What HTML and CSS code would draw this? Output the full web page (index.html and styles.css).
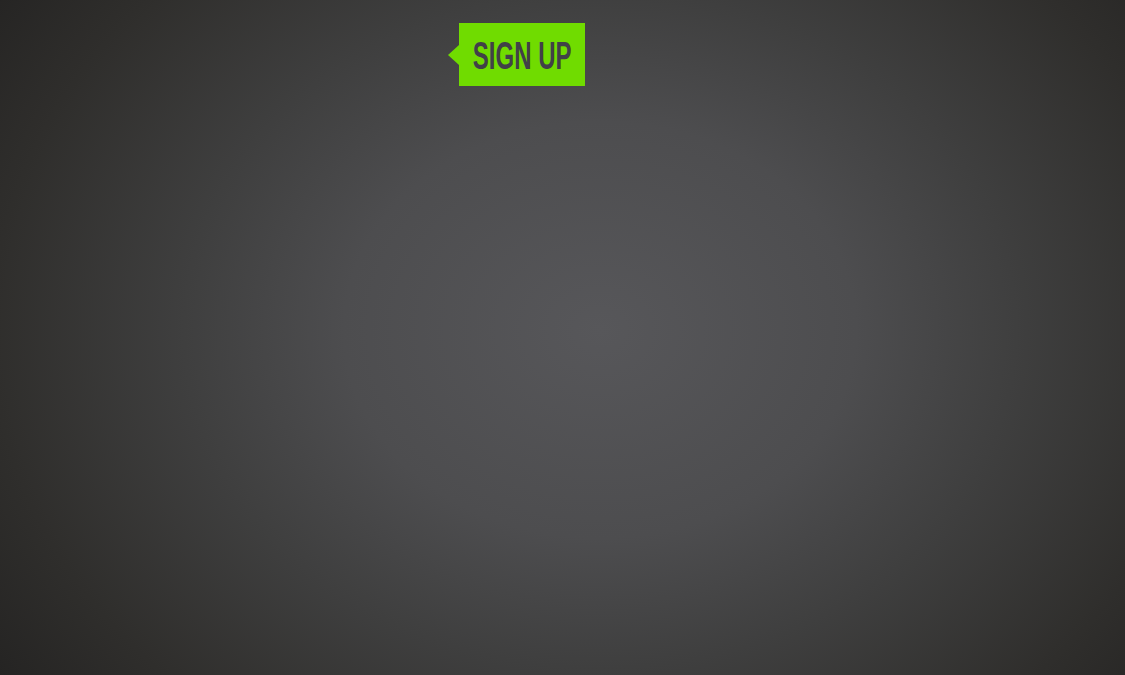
FILE: index.html
```html
<!DOCTYPE html>
<html lang="en">
<head>
<meta charset="utf-8">
<title>Sign up</title>
<link rel="stylesheet" href="styles.css">
</head>
<body>
<div class="stage">
  <header class="top">
    <a class="signup" href="#"><span class="signup-label">SIGN UP</span></a>
  </header>
</div>
</body>
</html>
```
FILE: styles.css
```css
html, body {
  margin: 0;
  padding: 0;
  height: 100%;
}
body {
  font-family: "Liberation Sans", Arial, sans-serif;
  background: #2a2928;
}
.stage {
  width: 100%;
  height: 100vh;
  overflow: hidden;
  background:
    radial-gradient(640px 520px at 600px 330px, #57575a 0%, #4d4d4f 40%, #3f3f3f 65%, #2f2e2c 95%, #252423 115%);
}
.top {
  display: flex;
  padding: 23px 0 0 459px;
}
.signup {
  position: relative;
  display: flex;
  align-items: center;
  justify-content: center;
  width: 126px;
  height: 63px;
  background: #70dc00;
  text-decoration: none;
}
.signup::before {
  content: "";
  position: absolute;
  left: -11px;
  top: 22px;
  width: 0;
  height: 0;
  border-top: 10px solid transparent;
  border-bottom: 10px solid transparent;
  border-right: 11px solid #70dc00;
}
.signup-label {
  display: inline-block;
  font-family: "Liberation Sans", Arial, sans-serif;
  font-weight: bold;
  font-size: 39px;
  line-height: 1;
  color: #414048;
  transform: scaleX(0.615);
  white-space: nowrap;
  margin-top: 2px;
}
```
